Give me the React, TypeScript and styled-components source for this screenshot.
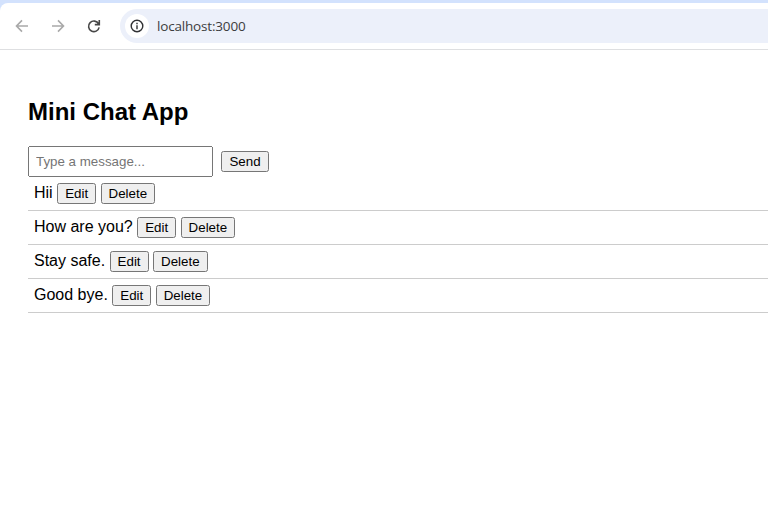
import React, { useState } from "react";
import styled, { createGlobalStyle } from "styled-components";

const GlobalStyle = createGlobalStyle`
  body {
    margin: 0;
    background: #fff;
    color: #000;
    font-family: "Liberation Sans", Arial, sans-serif;
    font-size: 16px;
    overflow: hidden;
  }
`;

const Browser = styled.div`
  height: 510px;
  overflow: hidden;
  background: linear-gradient(#d3e2fd 20px, #fff 20px);
  padding-top: 3px;
  box-sizing: border-box;
`;

const Toolbar = styled.header`
  box-sizing: border-box;
  height: 47px;
  display: flex;
  align-items: center;
  padding-left: 12px;
  background: #fff;
  border-top-left-radius: 8px;
  border-bottom: 1px solid #dedfe1;
`;

const NavIcon = styled.svg<{ $active?: boolean }>`
  width: 20px;
  height: 20px;
  margin-right: 16px;
  flex: none;
  fill: none;
  stroke: ${({ $active }) => ($active ? "#474747" : "#a9a9a9")};
  stroke-width: 1.6;
`;

const AddressBar = styled.div`
  flex: 1;
  height: 34px;
  box-sizing: border-box;
  display: flex;
  align-items: center;
  padding-left: 5px;
  border-radius: 17px 0 0 17px;
  background: #ecf0fa;
`;

const SiteInfo = styled.span`
  width: 24px;
  height: 24px;
  display: grid;
  place-items: center;
  border-radius: 50%;
  background: #fff;
  margin-right: 8px;
`;

const Url = styled.span`
  font: 400 13.5px/20px "Open Sans", sans-serif;
  color: #3c3d40;
  letter-spacing: -0.18px;
`;

const Page = styled.main`
  padding: 47px 0 0 28px;
`;

const Title = styled.h2`
  margin: 0 0 19px;
  font-size: 24px;
  line-height: 30px;
`;

const Composer = styled.form`
  display: flex;
  align-items: center;
  gap: 8px;
  height: 31px;
`;

const MessageInput = styled.input`
  box-sizing: border-box;
  width: 185px;
  height: 31px;
  padding: 6px;
  font: 13.3333px "Liberation Sans", Arial, sans-serif;
`;

const Button = styled.button`
  height: 21px;
  padding: 1px 6px;
  font: 13.3333px "Liberation Sans", Arial, sans-serif;
`;

const SendButton = styled(Button)`
  width: 48px;
`;

const MessageList = styled.ul`
  list-style: none;
  margin: 0;
  padding: 0;
`;

const Message = styled.li`
  box-sizing: border-box;
  height: 34px;
  padding: 6px;
  border-bottom: 1px solid #ccc;
`;

const initialMessages = ["Hii", "How are you?", "Stay safe.", "Good bye."];

export default function App() {
  const [messages, setMessages] = useState(initialMessages);
  const [draft, setDraft] = useState("");

  const send = (event: React.FormEvent) => {
    event.preventDefault();
    if (!draft.trim()) return;
    setMessages([...messages, draft]);
    setDraft("");
  };

  return (
    <>
      <GlobalStyle />
      <Browser>
        <Toolbar>
          <NavIcon viewBox="0 0 20 20">
            <path d="M16 10H5M10 4.4 4.5 10l5.5 5.6" />
          </NavIcon>
          <NavIcon viewBox="0 0 20 20">
            <path d="M4 10h11M10 4.4l5.5 5.6-5.5 5.6" />
          </NavIcon>
          <NavIcon viewBox="0 0 20 20" $active>
            <path d="M14.6 7.9A5.3 5.3 0 1 0 15.1 11.3M15.3 4v4.6H10.8" />
          </NavIcon>
          <AddressBar>
            <SiteInfo>
              <svg width="14" height="14" viewBox="0 0 14 14" fill="none" stroke="#303134">
                <circle cx="7" cy="7" r="5.8" strokeWidth="1.4" />
                <path d="M7 6.3v3.9M7 3.7v1.5" strokeWidth="1.4" />
              </svg>
            </SiteInfo>
            <Url>localhost:3000</Url>
          </AddressBar>
        </Toolbar>
        <Page>
          <Title>Mini Chat App</Title>
          <Composer onSubmit={send}>
            <MessageInput
              placeholder="Type a message..."
              value={draft}
              onChange={(event) => setDraft(event.target.value)}
            />
            <SendButton type="submit">Send</SendButton>
          </Composer>
          <MessageList>
            {messages.map((message, index) => (
              <Message key={index}>
                {message} <Button>Edit</Button>{" "}
                <Button onClick={() => setMessages(messages.filter((_, i) => i !== index))}>
                  Delete
                </Button>
              </Message>
            ))}
          </MessageList>
        </Page>
      </Browser>
    </>
  );
}
